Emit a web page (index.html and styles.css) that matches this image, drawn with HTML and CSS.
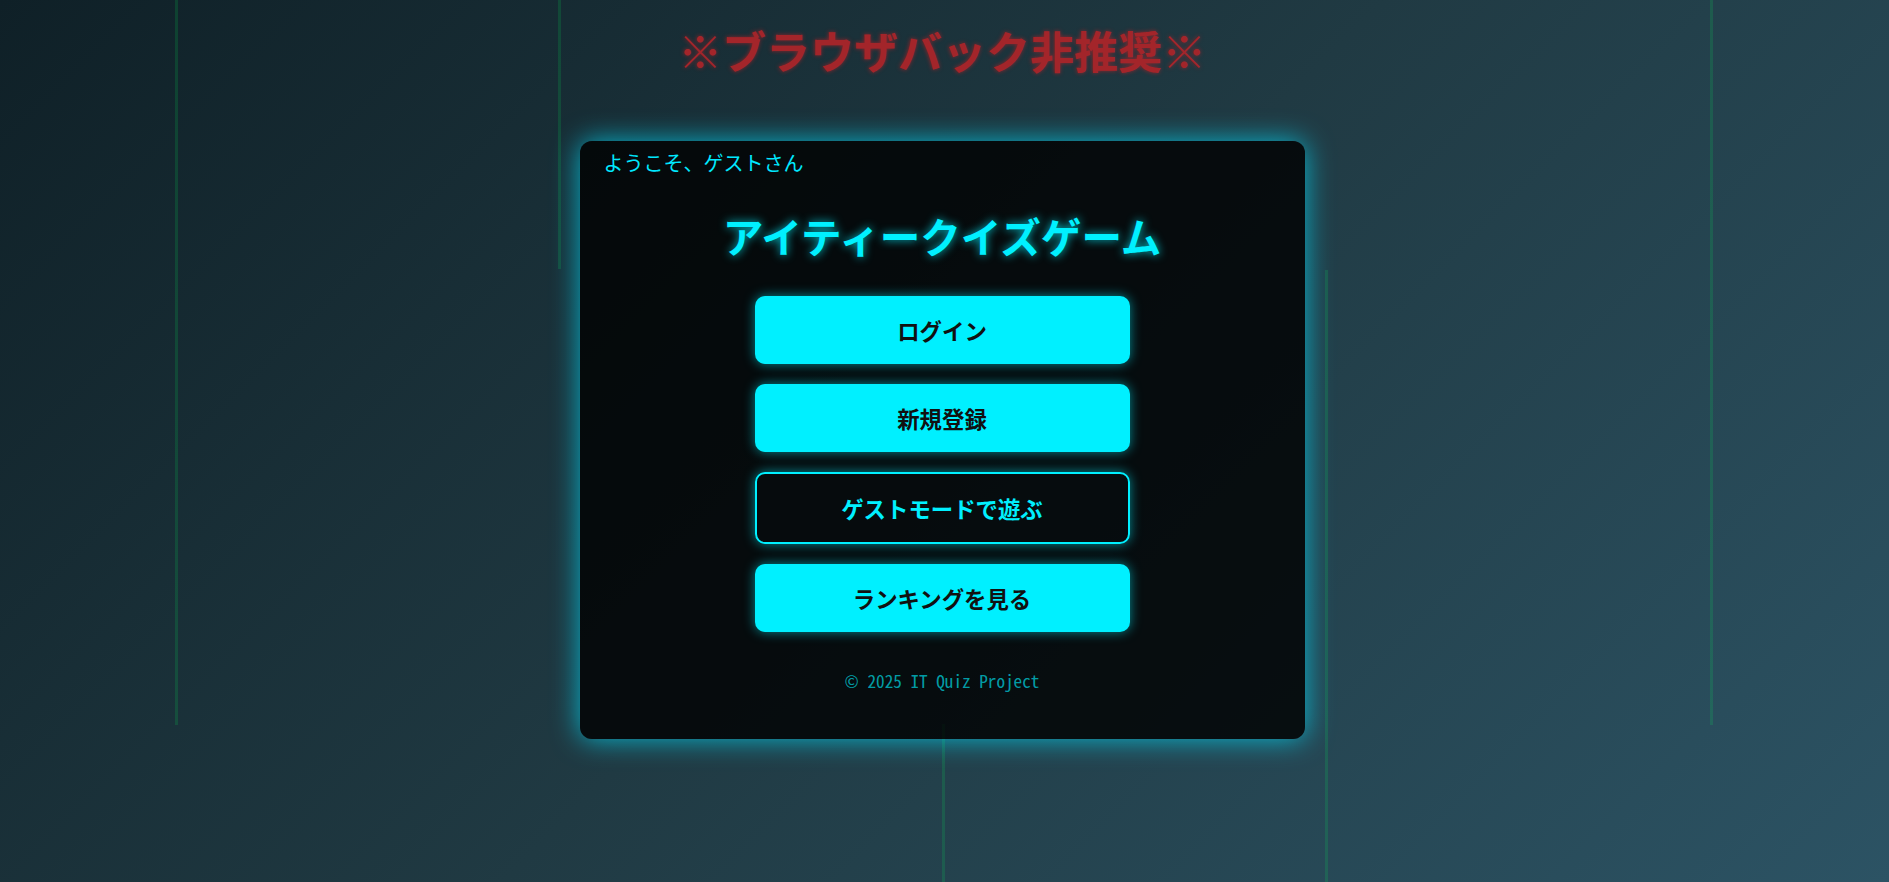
FILE: index.html
```html
<!DOCTYPE html>
<html lang="ja">
<head>
<meta charset="utf-8">
<title>アイティークイズゲーム</title>
<link rel="stylesheet" href="styles.css">
</head>
<body>
<div class="rain" aria-hidden="true">
  <span class="drop d1"></span>
  <span class="drop d2"></span>
  <span class="drop d3"></span>
  <span class="drop d4"></span>
  <span class="drop d5"></span>
</div>
<main class="page">
  <h1 class="warning">※ブラウザバック非推奨※</h1>
  <section class="card">
    <p class="welcome">ようこそ、ゲストさん</p>
    <h2 class="game-title">アイティークイズゲーム</h2>
    <nav class="menu">
      <button class="btn btn-solid">ログイン</button>
      <button class="btn btn-solid">新規登録</button>
      <button class="btn btn-outline">ゲストモードで遊ぶ</button>
      <button class="btn btn-solid">ランキングを見る</button>
    </nav>
    <footer class="copy">© 2025 IT Quiz Project</footer>
  </section>
</main>
</body>
</html>
```

FILE: styles.css
```css
html, body {
  margin: 0;
  padding: 0;
  height: 100%;
}

body {
  font-family: "Noto Sans CJK JP", "Noto Sans", sans-serif;
  background: linear-gradient(135deg, #0f2027 0%, #203a43 50%, #2c5364 100%);
  min-height: 882px;
  overflow: hidden;
  position: relative;
}

.rain {
  position: absolute;
  inset: 0;
  z-index: 0;
  pointer-events: none;
}

.drop {
  position: absolute;
  width: 3px;
  background: rgba(0, 255, 90, 0.14);
}

.d1 { left: 175px; top: 0; height: 725px; }
.d2 { left: 558px; top: 0; height: 269px; }
.d3 { left: 942px; top: 724px; height: 158px; }
.d4 { left: 1325px; top: 270px; height: 612px; }
.d5 { left: 1710px; top: 0; height: 725px; }

.page {
  position: relative;
  z-index: 1;
  display: flex;
  flex-direction: column;
  align-items: center;
  padding-right: 5px;
}

.warning {
  margin: 22px 0 0;
  font-size: 44px;
  line-height: 56px;
  font-weight: 700;
  color: #a3252a;
  text-shadow: 0 0 4px rgba(200, 30, 35, 0.7);
}

.card {
  margin-top: 63px;
  width: 725px;
  box-sizing: border-box;
  padding: 8px 24px 46px;
  background: rgba(0, 0, 0, 0.8);
  border-radius: 12px;
  box-shadow: 0 0 28px rgba(0, 225, 255, 0.75);
  display: flex;
  flex-direction: column;
  align-items: center;
}

.welcome {
  align-self: flex-start;
  margin: 0;
  font-size: 20px;
  line-height: 28px;
  color: #00e8ff;
}

.game-title {
  margin: 35px 0 0;
  font-size: 40.6px;
  line-height: 48px;
  font-weight: 700;
  color: #00f0ff;
  text-shadow: 0 0 10px rgba(0, 240, 255, 0.8);
}

.menu {
  margin-top: 36px;
  display: flex;
  flex-direction: column;
  gap: 20px;
  width: 375px;
}

.btn {
  font-family: inherit;
  font-size: 22.4px;
  font-weight: 700;
  border-radius: 10px;
  cursor: pointer;
}

.btn-solid {
  height: 68px;
  border: none;
  background: #00f0ff;
  color: #111;
  box-shadow: 0 0 12px rgba(0, 240, 255, 0.55);
}

.btn-outline {
  height: 72px;
  border: 2px solid #00f0ff;
  background: transparent;
  color: #00f0ff;
  box-shadow: 0 0 12px rgba(0, 240, 255, 0.55);
}

.copy {
  margin-top: 37px;
  font-family: "Noto Sans Mono CJK JP", "DejaVu Sans Mono", monospace;
  font-size: 17.2px;
  line-height: 24px;
  color: rgba(0, 240, 255, 0.65);
}
```
